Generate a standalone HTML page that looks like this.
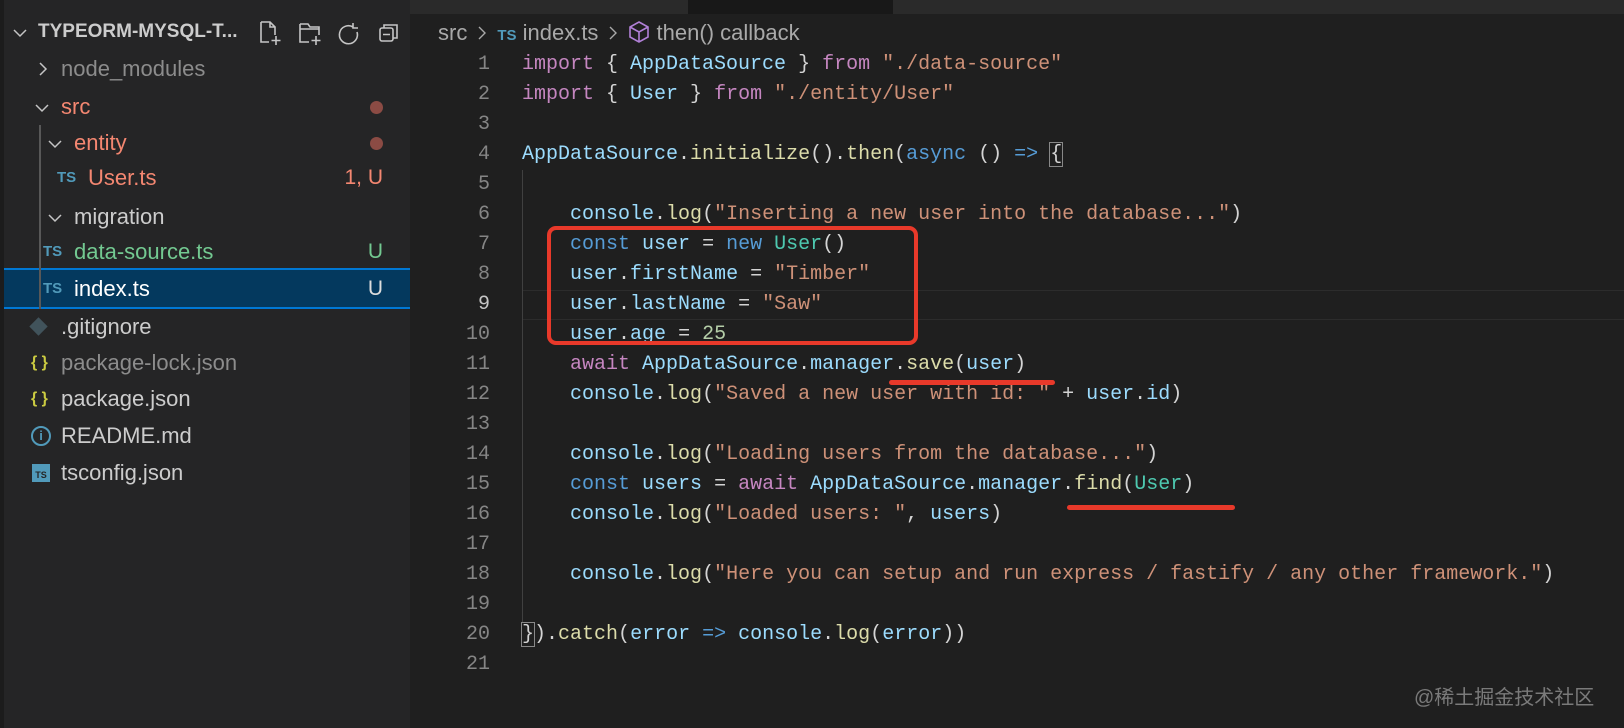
<!DOCTYPE html>
<html><head><meta charset="utf-8"><style>
*{margin:0;padding:0;box-sizing:border-box}
body{width:1624px;height:728px;background:#1f1f1f;overflow:hidden;position:relative;font-family:"Liberation Sans",sans-serif}
#side{position:absolute;left:4px;top:0;width:406px;height:728px;background:#252526}
#strip{position:absolute;left:0;top:0;width:4px;height:728px;background:#1c1c1c}
.row{position:absolute;left:0;width:406px;height:36px;line-height:36px;font-size:22px;color:#cccccc;white-space:nowrap}
.chev{position:absolute;top:11px}
.ts{font-size:15px;font-weight:bold;color:#519aba;position:absolute}
.dot{position:absolute;left:366px;top:12px;width:13px;height:13px;border-radius:50%;background:#8b4b44}
.badge{position:absolute;right:27px;top:0;font-size:21px}
#tabs{position:absolute;left:410px;top:0;width:1214px;height:14px;background:#181818}
.ln{position:absolute;left:410px;width:80px;text-align:right;font-family:"Liberation Mono",monospace;font-size:20px;color:#858585;height:30px;line-height:30px}
.cl{position:absolute;left:522px;font-family:"Liberation Mono",monospace;font-size:20px;color:#d4d4d4;height:30px;line-height:30px;white-space:pre}
.k{color:#c586c0}.b{color:#569cd6}.v{color:#9cdcfe}.f{color:#dcdcaa}.s{color:#ce9178}.t{color:#4ec9b0}.n{color:#b5cea8}
</style></head><body>
<div id="strip"></div>
<div id="side">
 <div class="row" style="top:14px;height:36px">
  <svg class="chev" style="left:8px;top:14px" width="16" height="10" fill="none" stroke="#c5c5c5" stroke-width="1.5"><path d="M2 2l6 6 6-6"/></svg>
  <span style="position:absolute;left:34px;font-size:19px;font-weight:bold;color:#ccc">TYPEORM-MYSQL-T...</span>
  <svg style="position:absolute;left:254px;top:6px" width="150" height="26" fill="none" stroke="#c5c5c5" stroke-width="1.6">
   <path d="M3 2h9l5 5v8M3 2v20h8M12 2v5h5M18 16v9M13.5 20.5h9"/>
   <path d="M42 4h8l2 3h9v8M42 4v18h9M42 9h19M58 16v9M53.5 20.5h9"/>
   <path d="M95 7a9 9 0 1 0 4 5M95 3v5h5"/>
   <rect x="122" y="8" width="13" height="13" rx="2"/><path d="M126 8V5h13v13h-4M125 14.5h7"/>
  </svg>
 </div>
 <div class="row" style="top:51px"><svg class="chev" style="left:34px;top:10px" width="10" height="16" fill="none" stroke="#c5c5c5" stroke-width="1.5"><path d="M2 2l6 6-6 6"/></svg><span style="position:absolute;left:57px;color:#8c8c8c">node_modules</span></div>
 <div class="row" style="top:89px"><svg class="chev" style="left:30px;top:14px" width="16" height="10" fill="none" stroke="#c5c5c5" stroke-width="1.5"><path d="M2 2l6 6 6-6"/></svg><span style="position:absolute;left:57px;color:#f48771">src</span><div class="dot"></div></div>
 <div class="row" style="top:125px"><svg class="chev" style="left:43px;top:14px" width="16" height="10" fill="none" stroke="#c5c5c5" stroke-width="1.5"><path d="M2 2l6 6 6-6"/></svg><span style="position:absolute;left:70px;color:#f48771">entity</span><div class="dot"></div></div>
 <div class="row" style="top:160px"><span class="ts" style="left:53px">TS</span><span style="position:absolute;left:84px;color:#f48771">User.ts</span><span class="badge" style="color:#f48771">1, U</span></div>
 <div class="row" style="top:199px"><svg class="chev" style="left:43px;top:14px" width="16" height="10" fill="none" stroke="#c5c5c5" stroke-width="1.5"><path d="M2 2l6 6 6-6"/></svg><span style="position:absolute;left:70px">migration</span></div>
 <div class="row" style="top:234px"><span class="ts" style="left:39px">TS</span><span style="position:absolute;left:70px;color:#73c991">data-source.ts</span><span class="badge" style="color:#73c991">U</span></div>
 <div class="row" style="top:268px;height:41px;background:#04395e;border-top:2px solid #0078d4;border-bottom:2px solid #0078d4;line-height:37px"><span class="ts" style="left:39px">TS</span><span style="position:absolute;left:70px;color:#fff">index.ts</span><span class="badge" style="color:#ddd">U</span></div>
 <div style="position:absolute;left:35px;top:125px;width:2px;height:184px;background:#585858"></div>
 <div class="row" style="top:309px"><span style="position:absolute;left:28px;top:11px;width:13px;height:13px;background:#41535b;transform:rotate(45deg)"></span><span style="position:absolute;left:57px">.gitignore</span></div>
 <div class="row" style="top:345px"><span style="position:absolute;left:27px;color:#cbcb41;font-size:16px;font-weight:bold">{ }</span><span style="position:absolute;left:57px;color:#8c8c8c">package-lock.json</span></div>
 <div class="row" style="top:381px"><span style="position:absolute;left:27px;color:#cbcb41;font-size:16px;font-weight:bold">{ }</span><span style="position:absolute;left:57px">package.json</span></div>
 <div class="row" style="top:418px"><span style="position:absolute;left:27px;top:8px;width:20px;height:20px;border:2px solid #519aba;border-radius:50%;color:#519aba;font-size:13px;line-height:16px;text-align:center;font-weight:bold">i</span><span style="position:absolute;left:57px">README.md</span></div>
 <div class="row" style="top:455px"><span style="position:absolute;left:28px;top:9px;width:18px;height:18px;background:#519aba;color:#252526;font-size:9px;line-height:22px;text-align:center;font-weight:bold">TS</span><span style="position:absolute;left:57px">tsconfig.json</span></div>
</div>
<div id="tabs"><div style="position:absolute;left:0;width:278px;height:14px;background:#2a2a2a"></div><div style="position:absolute;left:483px;width:731px;height:14px;background:#2a2a2a"></div></div>
<div style="position:absolute;left:438px;top:19px;height:28px;line-height:28px;font-size:22px;color:#a9a9a9;white-space:nowrap">src<svg width="30" height="16" style="vertical-align:-1px" fill="none" stroke="#a9a9a9" stroke-width="1.4"><path d="M12 2l6 6-6 6"/></svg><span style="color:#519aba;font-size:15px;font-weight:bold">TS</span> index.ts<svg width="30" height="16" style="vertical-align:-1px" fill="none" stroke="#a9a9a9" stroke-width="1.4"><path d="M12 2l6 6-6 6"/></svg><svg width="22" height="24" style="vertical-align:-4px" fill="none" stroke="#b180d7" stroke-width="1.6"><path d="M11 2l9 5v10l-9 5-9-5V7zM2 7l9 5 9-5M11 12v10"/></svg> then() callback</div>
<div style="position:absolute;left:522px;top:290px;width:1102px;height:30px;border-top:1px solid #2c2c2c;border-bottom:1px solid #2c2c2c"></div>
<div style="position:absolute;left:522px;top:170px;width:1px;height:452px;background:#404040"></div>
<div class="ln" style="top:50px">1</div><div class="ln" style="top:80px">2</div><div class="ln" style="top:110px">3</div><div class="ln" style="top:140px">4</div><div class="ln" style="top:170px">5</div><div class="ln" style="top:200px">6</div><div class="ln" style="top:230px">7</div><div class="ln" style="top:260px">8</div><div class="ln" style="top:290px;color:#c6c6c6">9</div><div class="ln" style="top:320px">10</div><div class="ln" style="top:350px">11</div><div class="ln" style="top:380px">12</div><div class="ln" style="top:410px">13</div><div class="ln" style="top:440px">14</div><div class="ln" style="top:470px">15</div><div class="ln" style="top:500px">16</div><div class="ln" style="top:530px">17</div><div class="ln" style="top:560px">18</div><div class="ln" style="top:590px">19</div><div class="ln" style="top:620px">20</div><div class="ln" style="top:650px">21</div>
<div class="cl" style="top:50px"><span class="k">import</span> { <span class="v">AppDataSource</span> } <span class="k">from</span> <span class="s">"./data-source"</span></div>
<div class="cl" style="top:80px"><span class="k">import</span> { <span class="v">User</span> } <span class="k">from</span> <span class="s">"./entity/User"</span></div>
<div class="cl" style="top:140px"><span class="v">AppDataSource</span>.<span class="f">initialize</span>().<span class="f">then</span>(<span class="b">async</span> () <span class="b">=&gt;</span> <span style="outline:1px solid #888">{</span></div>
<div class="cl" style="top:200px">    <span class="v">console</span>.<span class="f">log</span>(<span class="s">"Inserting a new user into the database..."</span>)</div>
<div class="cl" style="top:230px">    <span class="b">const</span> <span class="v">user</span> = <span class="b">new</span> <span class="t">User</span>()</div>
<div class="cl" style="top:260px">    <span class="v">user</span>.<span class="v">firstName</span> = <span class="s">"Timber"</span></div>
<div class="cl" style="top:290px">    <span class="v">user</span>.<span class="v">lastName</span> = <span class="s">"Saw"</span></div>
<div class="cl" style="top:320px">    <span class="v">user</span>.<span class="v">age</span> = <span class="n">25</span></div>
<div class="cl" style="top:350px">    <span class="k">await</span> <span class="v">AppDataSource</span>.<span class="v">manager</span>.<span class="f">save</span>(<span class="v">user</span>)</div>
<div class="cl" style="top:380px">    <span class="v">console</span>.<span class="f">log</span>(<span class="s">"Saved a new user with id: "</span> + <span class="v">user</span>.<span class="v">id</span>)</div>
<div class="cl" style="top:440px">    <span class="v">console</span>.<span class="f">log</span>(<span class="s">"Loading users from the database..."</span>)</div>
<div class="cl" style="top:470px">    <span class="b">const</span> <span class="v">users</span> = <span class="k">await</span> <span class="v">AppDataSource</span>.<span class="v">manager</span>.<span class="f">find</span>(<span class="t">User</span>)</div>
<div class="cl" style="top:500px">    <span class="v">console</span>.<span class="f">log</span>(<span class="s">"Loaded users: "</span>, <span class="v">users</span>)</div>
<div class="cl" style="top:560px">    <span class="v">console</span>.<span class="f">log</span>(<span class="s">"Here you can setup and run express / fastify / any other framework."</span>)</div>
<div class="cl" style="top:620px"><span style="outline:1px solid #888">}</span>).<span class="f">catch</span>(<span class="v">error</span> <span class="b">=&gt;</span> <span class="v">console</span>.<span class="f">log</span>(<span class="v">error</span>))</div>
<div style="position:absolute;left:547px;top:226px;width:371px;height:119px;border:4px solid #e8392a;border-radius:9px"></div>
<div style="position:absolute;left:889px;top:380px;width:166px;height:5px;background:#e8392a;border-radius:3px"></div>
<div style="position:absolute;left:1067px;top:505px;width:168px;height:5px;background:#e8392a;border-radius:3px"></div>
<div style="position:absolute;left:1414px;top:681px;font-size:20px;color:#7a7a7a;font-family:'Liberation Sans','Noto Sans CJK SC',sans-serif">@稀土掘金技术社区</div>
</body></html>
